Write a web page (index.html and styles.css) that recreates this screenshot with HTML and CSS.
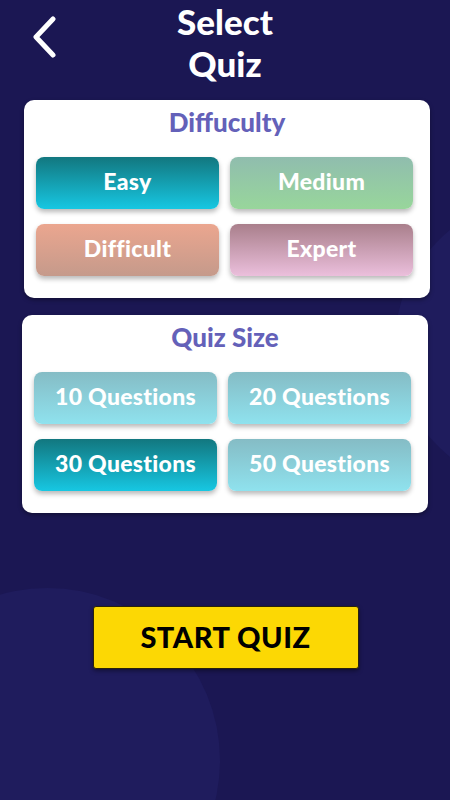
FILE: index.html
```html
<!DOCTYPE html>
<html>
<head>
<meta charset="utf-8">
<link rel="stylesheet" href="styles.css">
</head>
<body>
<div class="screen">
  <div class="blob blob-right"></div>
  <div class="blob blob-left"></div>
  <header class="header">
    <button class="back" aria-label="Back">
      <svg width="30" height="44" viewBox="0 0 30 44"><polyline points="22,5 5,23 22,41" fill="none" stroke="#fff" stroke-width="5" stroke-linecap="round" stroke-linejoin="round"/></svg>
    </button>
    <h1 class="title">Select<br>Quiz</h1>
  </header>
  <section class="card card-diff">
    <h2 class="card-title">Diffuculty</h2>
    <div class="grid">
      <div class="opt easy">Easy</div>
      <div class="opt medium">Medium</div>
      <div class="opt difficult">Difficult</div>
      <div class="opt expert">Expert</div>
    </div>
  </section>
  <section class="card card-size">
    <h2 class="card-title">Quiz Size</h2>
    <div class="grid">
      <div class="opt q">10 Questions</div>
      <div class="opt q">20 Questions</div>
      <div class="opt sel">30 Questions</div>
      <div class="opt q">50 Questions</div>
    </div>
  </section>
  <div class="start-wrap">
    <button class="start">START QUIZ</button>
  </div>
</div>
</body>
</html>
```
FILE: styles.css
```css
html, body {
  margin: 0;
  padding: 0;
}
body {
  width: 450px;
  height: 800px;
  overflow: hidden;
  background: #1b1753;
  font-family: "Lato", "Open Sans", sans-serif;
}
.screen {
  position: relative;
  width: 450px;
  height: 800px;
  overflow: hidden;
}
.blob {
  position: absolute;
  border-radius: 50%;
  background: #1f1c5d;
  z-index: 0;
}
.blob-right {
  left: 395px;
  top: 197px;
  width: 300px;
  height: 293px;
}
.blob-left {
  left: -125px;
  top: 588px;
  width: 345px;
  height: 345px;
}
.header {
  position: relative;
  z-index: 1;
  height: 100px;
  display: flex;
  justify-content: center;
}
.back {
  position: absolute;
  left: 31px;
  top: 14px;
  background: none;
  border: 0;
  padding: 0;
  cursor: pointer;
}
.title {
  margin: 0;
  color: #fff;
  font-size: 35px;
  font-weight: 900;
  line-height: 42px;
  text-align: center;
}
.card {
  position: relative;
  z-index: 1;
  width: 406px;
  height: 198px;
  box-sizing: border-box;
  background: #fff;
  border-radius: 10px;
  padding: 6px 12px 0;
  box-shadow: 0 2px 4px rgba(0, 0, 0, 0.35);
}
.card-diff {
  margin-left: 24px;
}
.card-size {
  margin-left: 22px;
  margin-top: 17px;
}
.card-title {
  margin: 0;
  height: 32px;
  line-height: 32px;
  text-align: center;
  color: #6461b9;
  font-size: 26px;
  font-weight: 900;
}
.grid {
  margin-top: 19px;
  display: grid;
  grid-template-columns: 183px 183px;
  column-gap: 11px;
  row-gap: 15px;
}
.opt {
  height: 52px;
  box-sizing: border-box;
  padding-bottom: 5px;
  border-radius: 8px;
  display: flex;
  align-items: center;
  justify-content: center;
  color: #fff;
  font-size: 23px;
  font-weight: 900;
  letter-spacing: 0.3px;
  box-shadow: 0 3px 5px rgba(0, 0, 0, 0.28);
}
.easy, .sel {
  background: linear-gradient(#12777f, #17c7e2);
}
.medium {
  background: linear-gradient(#90bdae, #98d69b);
}
.difficult {
  background: linear-gradient(#eba68f, #c59a8b);
}
.expert {
  background: linear-gradient(#a97f8b, #ebbfdc);
}
.q {
  background: linear-gradient(#85bcc5, #8fe2ee);
}
.start-wrap {
  position: relative;
  z-index: 1;
  display: flex;
  justify-content: center;
  margin-top: 93px;
}
.start {
  width: 266px;
  height: 63px;
  margin-left: 1px;
  padding: 0 0 3px;
  background: #fcd804;
  border: 1px solid #2a230a;
  border-radius: 3px;
  color: #000;
  font-family: "Lato", sans-serif;
  font-size: 29px;
  font-weight: 900;
  letter-spacing: 0.5px;
  box-shadow: 0 2px 4px rgba(0, 0, 0, 0.4);
}
```
